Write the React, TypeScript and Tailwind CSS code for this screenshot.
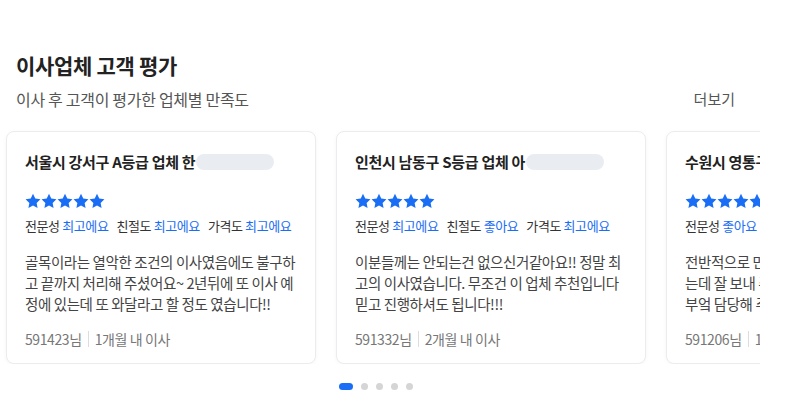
const font = { fontFamily: '"Noto Sans CJK KR", "Noto Sans", sans-serif' };

type Review = {
  title: string;
  ratings: { label: string; value: string }[];
  lines: string[];
  user: string;
  when: string;
};

const reviews: Review[] = [
  {
    title: '서울시 강서구 A등급 업체 한',
    ratings: [
      { label: '전문성', value: '최고에요' },
      { label: '친절도', value: '최고에요' },
      { label: '가격도', value: '최고에요' },
    ],
    lines: [
      '골목이라는 열악한 조건의 이사였음에도 불구하',
      '고 끝까지 처리해 주셨어요~ 2년뒤에 또 이사 예',
      '정에 있는데 또 와달라고 할 정도 였습니다!!',
    ],
    user: '591423님',
    when: '1개월 내 이사',
  },
  {
    title: '인천시 남동구 S등급 업체 아',
    ratings: [
      { label: '전문성', value: '최고에요' },
      { label: '친절도', value: '좋아요' },
      { label: '가격도', value: '최고에요' },
    ],
    lines: [
      '이분들께는 안되는건 없으신거같아요!! 정말 최',
      '고의 이사였습니다. 무조건 이 업체 추천입니다',
      '믿고 진행하셔도 됩니다!!!',
    ],
    user: '591332님',
    when: '2개월 내 이사',
  },
  {
    title: '수원시 영통구 A등급 업체 김',
    ratings: [{ label: '전문성', value: '좋아요' }],
    lines: [
      '전반적으로 만족스러운 이사였습니다. 짐이 많았',
      '는데 잘 보내 주셨고 정리도 깔끔했어요.',
      '부엌 담당해 주신 분이 특히 꼼꼼하셨습니다',
    ],
    user: '591206님',
    when: '1개월 내 이사',
  },
];

function Star() {
  return (
    <svg width="16" height="16" viewBox="1 1.2 22 21" className="fill-[#1a6ef5]">
      <path d="M12 1.8l3.1 6.6 7.1.9-5.2 5 1.3 7.1L12 18l-6.3 3.4 1.3-7.1-5.2-5 7.1-.9z" />
    </svg>
  );
}

function ReviewCard({ r }: { r: Review }) {
  return (
    <div className="w-[310px] shrink-0 h-[233px] rounded-lg border border-[#ececf0] bg-white shadow-[0_1px_4px_rgba(0,0,0,0.04)] px-[18px] pt-[19px]">
      <div className="flex items-center h-[22px]">
        <span className="text-[15px] font-bold text-[#222] tracking-[-0.3px] whitespace-nowrap">{r.title}</span>
        <span className="ml-[1px] w-[78px] h-[16px] shrink-0 rounded-full bg-[#e9ecf1]" />
      </div>
      <div className="flex mt-[20px]">
        {[0, 1, 2, 3, 4].map((i) => (
          <Star key={i} />
        ))}
      </div>
      <div className="flex gap-[8px] mt-[7px] text-[13px] leading-[20px] tracking-[-0.4px] whitespace-nowrap">
        {r.ratings.map((x) => (
          <span key={x.label} className="text-[#333]">
            {x.label} <span className="text-[#1a6ef5]">{x.value}</span>
          </span>
        ))}
      </div>
      <div className="mt-[15px] text-[14.5px] leading-[21px] text-[#444] tracking-[-0.4px] whitespace-nowrap">
        {r.lines.map((l) => (
          <p key={l}>{l}</p>
        ))}
      </div>
      <div className="mt-[15px] flex items-center h-[20px] text-[14px] text-[#777] tracking-[-0.4px] whitespace-nowrap">
        <span>{r.user}</span>
        <span className="mx-[6px] w-px h-[16px] bg-[#ddd]" />
        <span>{r.when}</span>
      </div>
    </div>
  );
}

export default function App() {
  return (
    <div className="w-[798px] h-[405px] bg-white" style={font}>
      <div className="w-[760px] overflow-hidden">
        <div className="px-4 pt-[49px]">
          <h2 className="text-[21px] font-bold text-[#222] leading-[32px] tracking-[-0.3px]">이사업체 고객 평가</h2>
          <div className="flex justify-between items-center mt-[6px] pr-[9px]">
            <p className="text-[16px] text-[#555] leading-[24px] tracking-[-0.3px]">이사 후 고객이 평가한 업체별 만족도</p>
            <span className="text-[15px] text-[#555]">더보기</span>
          </div>
        </div>
        <div className="flex gap-5 pl-[6px] pt-[20px]">
          {reviews.map((r) => (
            <ReviewCard key={r.user} r={r} />
          ))}
        </div>
      </div>
      <div className="flex justify-center gap-2 mt-[19px] pr-[47px]">
        <span className="w-[14px] h-[7px] rounded-full bg-[#1a6ef5]" />
        <span className="w-[7px] h-[7px] rounded-full bg-[#d5d5d5]" />
        <span className="w-[7px] h-[7px] rounded-full bg-[#d5d5d5]" />
        <span className="w-[7px] h-[7px] rounded-full bg-[#d5d5d5]" />
        <span className="w-[7px] h-[7px] rounded-full bg-[#d5d5d5]" />
      </div>
    </div>
  );
}
